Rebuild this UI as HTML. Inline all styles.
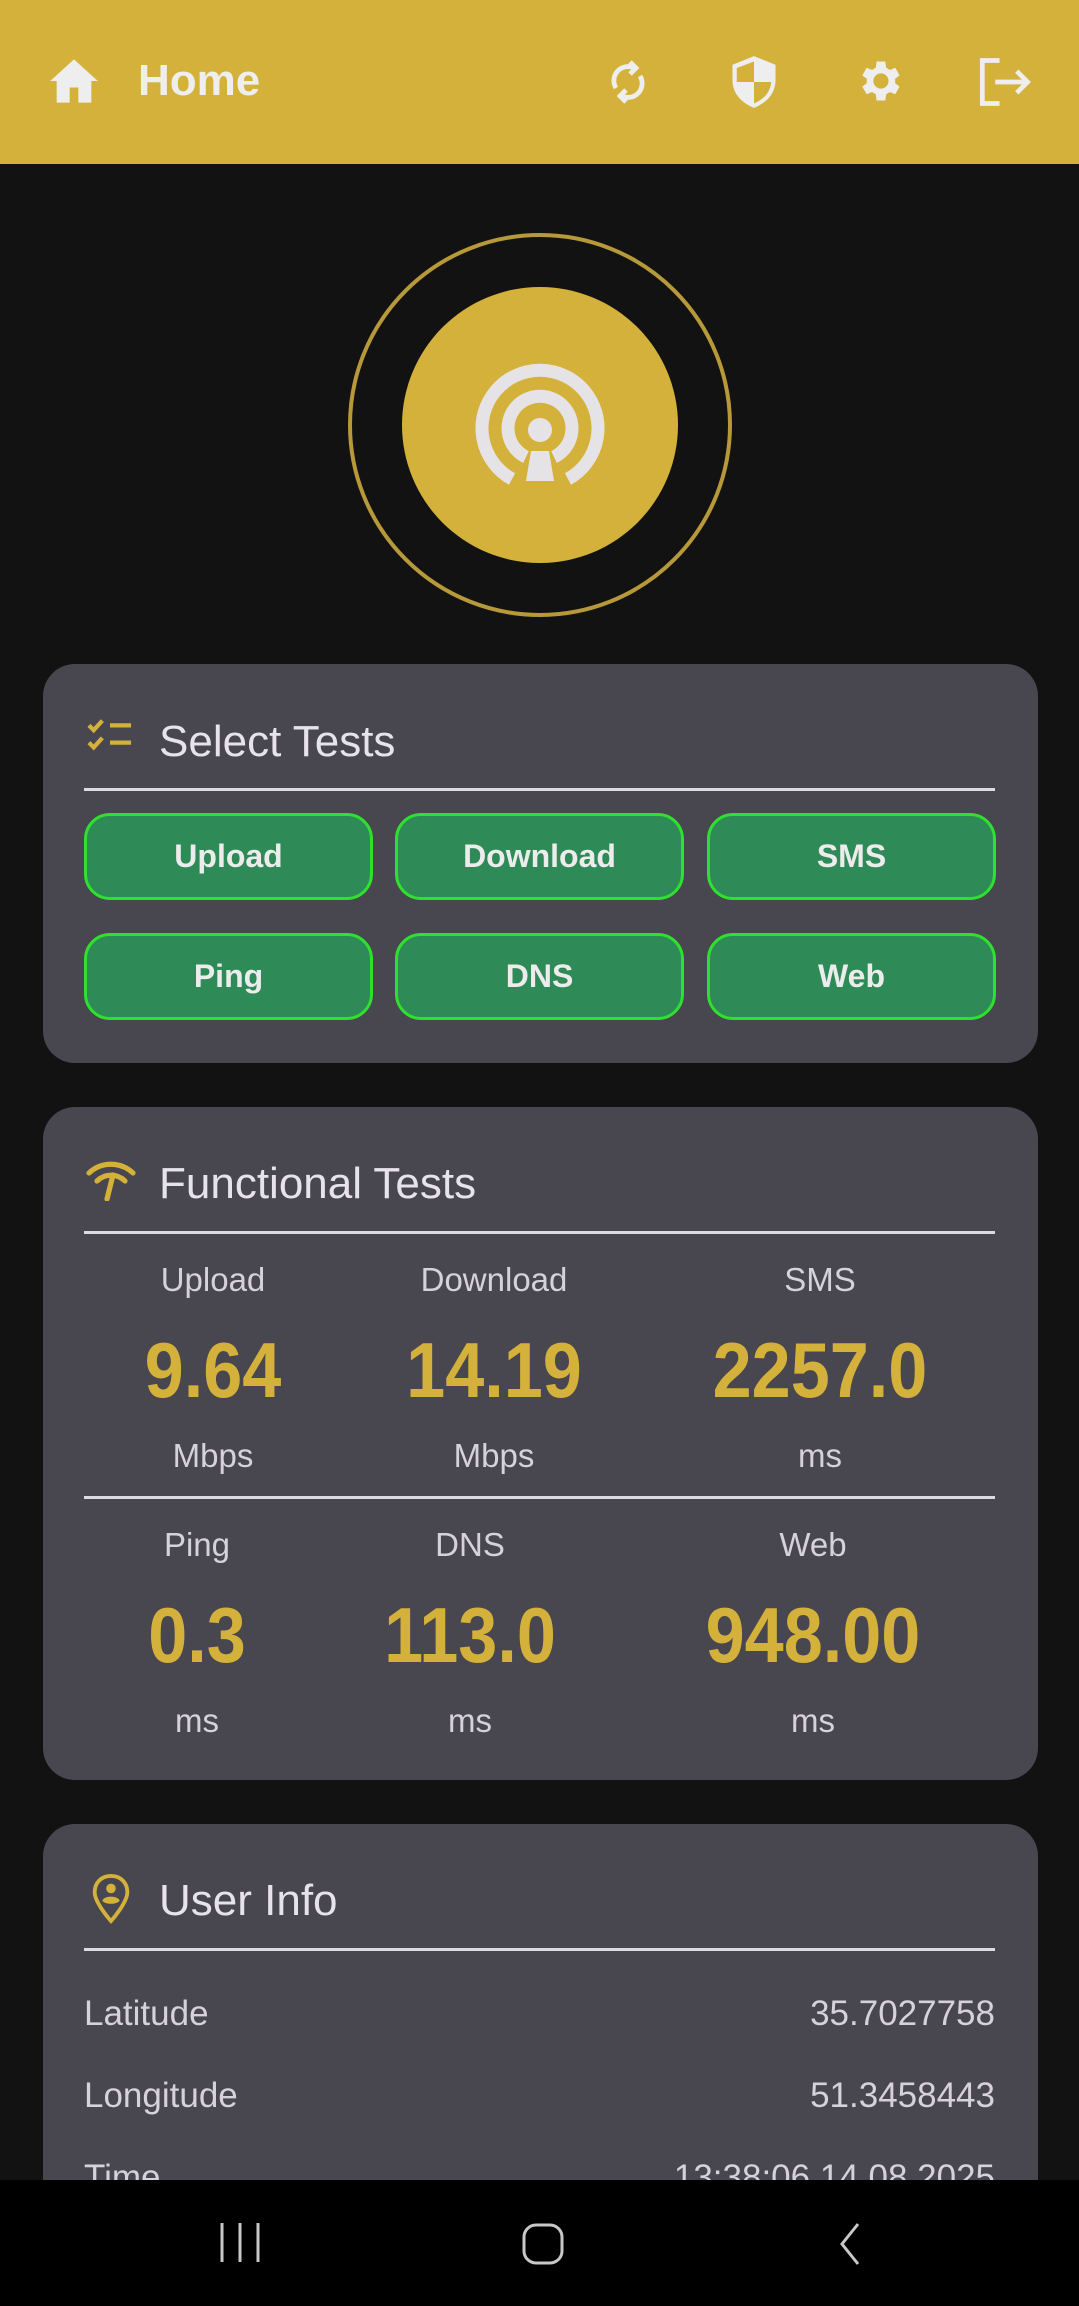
<!DOCTYPE html>
<html style="overflow:hidden;width:1079px;height:2306px"><head><meta charset="utf-8"><style>
*{margin:0;padding:0;box-sizing:border-box}
body{width:1079px;height:2306px;background:#121212;position:relative;overflow:hidden;font-family:"Liberation Sans",sans-serif}
.a{position:absolute}
.hdr{left:0;top:0;width:1079px;height:164px;background:#D4B13A}
.card{position:absolute;left:43px;width:995px;background:#48464f;border-radius:32px;overflow:hidden}
.title{position:absolute;left:116px;font-size:44px;color:#e6e3ea;line-height:1}
.div{position:absolute;left:41px;width:911px;height:3px;background:#dddbe2}
.btn{position:absolute;width:289px;height:87px;background:#2e8b57;border:3px solid #2fe02f;border-radius:26px;color:#ececec;font-weight:bold;font-size:32px;display:flex;align-items:center;justify-content:center}
.c{position:absolute;transform:translateX(-50%);white-space:nowrap;line-height:1}
.lab{font-size:33px;color:#d6d2dc}
.val{font-size:78px;font-weight:bold;color:#D4B13A;transform:translateX(-50%) scaleX(0.9)}
.row{position:absolute;left:41px;width:911px;font-size:35px;color:#d6d2dc;display:flex;justify-content:space-between;line-height:1}
</style></head><body>
<div class="a hdr"></div>
<svg class="a" style="left:48px;top:57px" width="52" height="48" viewBox="0 0 24 22"><path d="M12 1 L1 11 H4 V21 H10 V14 H14 V21 H20 V11 H23 Z" fill="#eee"/></svg>
<div class="a" style="left:138px;top:59px;font-size:44px;color:#eee;font-weight:bold;line-height:1">Home</div>
<svg class="a" style="left:604px;top:54px" width="48" height="56" viewBox="0 0 24 24" fill="none" stroke="#eee" stroke-width="2.4"><path d="M6 15 A7 7 0 0 1 15 5"/><path d="M18 9 A7 7 0 0 1 9 19"/><path d="M13 2 L16 5 L13 8" /><path d="M11 16 L8 19 L11 22"/></svg>
<svg class="a" style="left:728px;top:54px" width="52" height="56" viewBox="0 0 24 26"><path d="M12 1 L22 5 V12 C22 19 17 23 12 25 C7 23 2 19 2 12 V5 Z" fill="#eee"/><path d="M12 3.5 V13 H4 V6.5 Z M12 13 H20 C19.5 18 16.5 21 12 23 Z" fill="#D4B13A"/></svg>
<svg class="a" style="left:853px;top:55px" width="52" height="52" viewBox="0 0 24 24"><path fill="#eee" d="M19.4 13a7.6 7.6 0 0 0 0-2l2.1-1.6-2-3.5-2.5 1a7.7 7.7 0 0 0-1.7-1L14.9 3h-4l-.4 2.9a7.7 7.7 0 0 0-1.7 1l-2.5-1-2 3.5L6.4 11a7.6 7.6 0 0 0 0 2l-2.1 1.6 2 3.5 2.5-1a7.7 7.7 0 0 0 1.700 1l.4 2.9h4l.4-2.9a7.7 7.7 0 0 0 1.7-1l2.5 1 2-3.5zM12.9 15.5a3.5 3.5 0 1 1 0-7 3.5 3.5 0 0 1 0 7z"/></svg>
<svg class="a" style="left:978px;top:55px" width="56" height="54" viewBox="0 0 26 24" fill="none" stroke="#eee" stroke-width="2.2"><path d="M10 2 H2 V22 H10"/><path d="M8 12 H23 M18 7 L23 12 L18 17"/></svg>

<svg class="a" style="left:346px;top:231px" width="388" height="388"><circle cx="194" cy="194" r="190" fill="none" stroke="#b8993a" stroke-width="4"/><circle cx="194" cy="194" r="138" fill="#D4B13A"/>
<g fill="none" stroke="#e6e3e6" stroke-width="13"><path d="M166 248 A58 58 0 1 1 222 248"/><path d="M180 226 A32 32 0 1 1 208 226"/></g><circle cx="194" cy="199" r="12" fill="#e6e3e6"/><path d="M185 220 L203 220 L208 250 L180 250Z" fill="#e6e3e6"/></svg>

<div class="card" style="top:664px;height:399px">
<svg class="a" style="left:44px;top:53px" width="46" height="36" viewBox="0 0 24 18" fill="none" stroke="#D4B13A" stroke-width="2.2"><path d="M1 4 L3.5 6.5 L8 1.5 M1 13 L3.5 15.5 L8 10.5 M12 4 H23 M12 13 H23"/></svg>
<div class="title" style="top:56px">Select Tests</div>
<div class="div" style="top:124px"></div>
<div class="btn" style="left:41px;top:149px">Upload</div>
<div class="btn" style="left:352px;top:149px">Download</div>
<div class="btn" style="left:664px;top:149px">SMS</div>
<div class="btn" style="left:41px;top:269px">Ping</div>
<div class="btn" style="left:352px;top:269px">DNS</div>
<div class="btn" style="left:664px;top:269px">Web</div>
</div>

<div class="card" style="top:1107px;height:673px">
<svg class="a" style="left:42px;top:54px" width="52" height="40" viewBox="0 0 26 20" fill="none" stroke="#D4B13A" stroke-width="2.6" stroke-linecap="round"><path d="M2 6 A16 16 0 0 1 24 6"/><path d="M6 10 A10 10 0 0 1 20 10"/><path d="M14 7 L11 19"/></svg>
<div class="title" style="top:55px">Functional Tests</div>
<div class="div" style="top:124px"></div>
<div class="c lab" style="left:170px;top:156px">Upload</div>
<div class="c lab" style="left:451px;top:156px">Download</div>
<div class="c lab" style="left:777px;top:156px">SMS</div>
<div class="c val" style="left:170px;top:224px">9.64</div>
<div class="c val" style="left:451px;top:224px">14.19</div>
<div class="c val" style="left:777px;top:224px">2257.0</div>
<div class="c lab" style="left:170px;top:332px">Mbps</div>
<div class="c lab" style="left:451px;top:332px">Mbps</div>
<div class="c lab" style="left:777px;top:332px">ms</div>
<div class="div" style="top:389px"></div>
<div class="c lab" style="left:154px;top:421px">Ping</div>
<div class="c lab" style="left:427px;top:421px">DNS</div>
<div class="c lab" style="left:770px;top:421px">Web</div>
<div class="c val" style="left:154px;top:489px">0.3</div>
<div class="c val" style="left:427px;top:489px">113.0</div>
<div class="c val" style="left:770px;top:489px">948.00</div>
<div class="c lab" style="left:154px;top:597px">ms</div>
<div class="c lab" style="left:427px;top:597px">ms</div>
<div class="c lab" style="left:770px;top:597px">ms</div>
</div>

<div class="card" style="top:1824px;height:482px;border-radius:32px 32px 0 0">
<svg class="a" style="left:48px;top:50px" width="40" height="50" viewBox="0 0 20 26"><path d="M10 1 C5 1 1.5 4.5 1.5 9.5 C1.5 15 10 24.5 10 24.5 C10 24.5 18.5 15 18.5 9.5 C18.5 4.5 15 1 10 1Z" fill="none" stroke="#D4B13A" stroke-width="2"/><circle cx="10" cy="7.5" r="2.5" fill="#D4B13A"/><path d="M5.5 14 C6 11 14 11 14.5 14 C13 16 7 16 5.5 14Z" fill="#D4B13A"/></svg>
<div class="title" style="top:55px">User Info</div>
<div class="div" style="top:124px"></div>
<div class="row" style="top:172px"><span>Latitude</span><span>35.7027758</span></div>
<div class="row" style="top:254px"><span>Longitude</span><span>51.3458443</span></div>
<div class="row" style="top:336px"><span>Time</span><span>13:38:06 14.08.2025</span></div>
</div>

<div class="a" style="left:0;top:2180px;width:1079px;height:126px;background:#000"></div>
<svg class="a" style="left:0;top:2180px" width="1079" height="126" fill="none" stroke="#c8c8c8" stroke-width="3"><path d="M222 43 V82 M240 43 V82 M258 43 V82"/><rect x="524" y="45" width="38" height="38" rx="12"/><path d="M858 44 L842 64 L858 84"/></svg>
</body></html>
